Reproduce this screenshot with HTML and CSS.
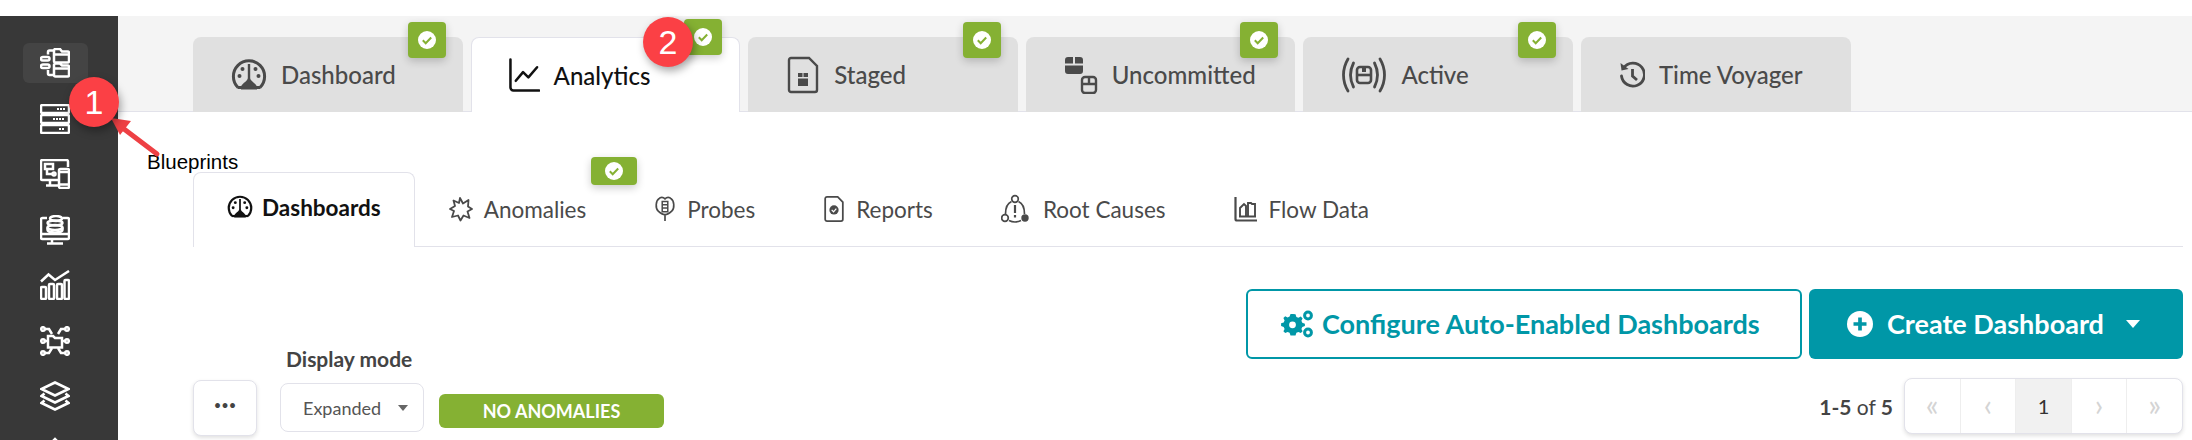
FILE: index.html
```html
<!DOCTYPE html>
<html lang="en">
<head>
<meta charset="utf-8">
<title>Blueprints - Analytics</title>
<link rel="stylesheet" href="styles.css">
</head>
<body>
<svg class="defs" width="0" height="0" aria-hidden="true">
  <symbol id="gauge" viewBox="0 0 36 36">
    <path d="M7 30.500A15.600 15.600 0 1 1 29 30.500" fill="none" stroke="currentColor" stroke-width="3"/>
    <path d="M6.500 30.500h23" stroke="currentColor" stroke-width="3"/>
    <path d="M16.800 7h2.400v14c0 3 4.800 4.500 6.800 8.500v3H10v-3c2-4 6.800-5.500 6.800-8.500z" fill="currentColor"/>
    <circle cx="8.500" cy="19" r="2" fill="currentColor"/><circle cx="11.500" cy="12" r="2" fill="currentColor"/>
    <circle cx="24.500" cy="12" r="2" fill="currentColor"/><circle cx="27.500" cy="19" r="2" fill="currentColor"/>
  </symbol>
  <symbol id="check" viewBox="0 0 20 20">
    <circle cx="10" cy="10" r="9" fill="#fff"/>
    <path d="M5.800 10.300l2.900 2.900 5.500-5.700" fill="none" stroke="#85b133" stroke-width="2"/>
  </symbol>
</svg>
<div class="app">
  <nav class="rail">
    <a class="rail-item is-active"><svg viewBox="0 0 30 30" class="rail-icon"><path d="M14 5.500V13a1.500 1.500 0 0 0 1.500 1.500h12A1.500 1.500 0 0 0 29 13V5a1.500 1.500 0 0 0-1.500-1.500H22L20 1h-4.500A1.500 1.500 0 0 0 14 2.500zM14.500 6.500H29M14 18.500V27a1.500 1.500 0 0 0 1.500 1.500h12A1.500 1.500 0 0 0 29 27V19a1.500 1.500 0 0 0-1.500-1.500H22L20 15.500h-4.500A1.500 1.500 0 0 0 14 17zM15 20.500h14M13 2.500H9.500A1.500 1.500 0 0 0 8 4v2.500M8 22v3.500A1.500 1.500 0 0 0 9.500 27H13"/><rect x="1" y="9" width="8.500" height="3.600" rx="1.800"/><rect x="1" y="16.500" width="8.500" height="3.600" rx="1.800"/></svg></a>
    <a class="rail-item"><svg viewBox="0 0 30 30" class="rail-icon"><rect x="1" y="1" width="28" height="8" rx="1.500"/><rect x="1" y="11" width="28" height="8" rx="1.500"/><rect x="1" y="21" width="28" height="8" rx="1.500"/><path class="dots" d="M17 5h8M13 15h12M19 25h6"/></svg></a>
    <a class="rail-item"><svg viewBox="0 0 30 30" class="rail-icon"><path d="M18 21H2.500A1.500 1.500 0 0 1 1 19.500V2.500A1.500 1.500 0 0 1 2.500 1h24A1.500 1.500 0 0 1 28 2.500V8M10 21v5M6 26.500h12M5 5h8v5H5zM7 10v5h6"/><circle cx="14" cy="15" r="1.500"/><rect x="19" y="10" width="10" height="19" rx="1.500"/><path d="M19.500 13h9M19.500 25.500h9"/></svg></a>
    <a class="rail-item"><svg viewBox="0 0 30 30" class="rail-icon"><path d="M7 3H2.500A1.500 1.500 0 0 0 1 4.500v18A1.500 1.500 0 0 0 2.500 24h25a1.500 1.500 0 0 0 1.500-1.500v-18A1.500 1.500 0 0 0 27.500 3H23M1.500 19h27M12 24v4M7 28.500h16"/><ellipse cx="16" cy="3.500" rx="6" ry="2.400"/><ellipse cx="15" cy="8" rx="7.500" ry="2.400"/><ellipse cx="15" cy="12.500" rx="7.500" ry="2.400"/><path d="M7.500 12.500v2.500c0 1.300 3.400 2.400 7.500 2.400s7.500-1.100 7.500-2.400v-2.500"/></svg></a>
    <a class="rail-item"><svg viewBox="0 0 30 30" class="rail-icon"><path d="M1 11.500l7.500-7 6.500 5.500L29 1"/><rect x="1" y="17" width="5" height="12" rx="1"/><rect x="9" y="14" width="5" height="15" rx="1"/><rect x="17" y="14" width="5" height="15" rx="1"/><rect x="24.500" y="10" width="4.500" height="19" rx="1"/></svg></a>
    <a class="rail-item"><svg viewBox="0 0 30 30" class="rail-icon"><path d="M8 10h5l2 2h7v9.500H8z"/><path d="M4 3h5l3 5M26 3h-5l-3 5M5 15h3M22 15h3M4 27h5l3-5M26 27h-5l-3-5"/><circle cx="3" cy="3" r="1.800"/><circle cx="27" cy="3" r="1.800"/><circle cx="3" cy="15" r="1.800"/><circle cx="27" cy="15" r="1.800"/><circle cx="3" cy="27" r="1.800"/><circle cx="27" cy="27" r="1.800"/></svg></a>
    <a class="rail-item"><svg viewBox="0 0 30 30" class="rail-icon"><path d="M15 1.500L28.500 8 15 14.500 1.500 8zM4.500 12.500l-3 2.500L15 21.500 28.500 15l-3-2.500M4.500 19.500l-3 2.500L15 28.500 28.500 22l-3-2.500"/></svg></a>
    <a class="rail-item"><svg viewBox="0 0 30 30" class="rail-icon"><path d="M15 2v12M9 8l6-6 6 6"/></svg></a>
  </nav>
  <main class="main">
    <header class="top">
      <ul class="tabs">
        <li class="tab"><svg class="tab-icon gauge"><use href="#gauge"/></svg><span>Dashboard</span><span class="badge"><svg class="check"><use href="#check"/></svg></span></li>
        <li class="tab is-current"><svg class="tab-icon chart" viewBox="0 0 32 36"><path d="M1.500 2v29a3 3 0 0 0 3 3H31" fill="none" stroke="currentColor" stroke-width="2.600" stroke-linecap="round"/><path d="M7 24l7.500-9 5.500 5.500L29 10" fill="none" stroke="currentColor" stroke-width="2.600" stroke-linecap="round" stroke-linejoin="round"/></svg><span>Analytics</span><span class="badge badge-raised"><svg class="check"><use href="#check"/></svg></span></li>
        <li class="tab"><svg class="tab-icon" viewBox="0 0 32 38"><path d="M2 4a2 2 0 0 1 2-2h18l8 8v24a2 2 0 0 1-2 2H4a2 2 0 0 1-2-2z" fill="none" stroke="currentColor" stroke-width="2.400"/><path d="M11 17h4.500v4H11zM16.500 17H21v4h-4.500zM11 22.500h10V30H11z" fill="currentColor"/></svg><span>Staged</span><span class="badge"><svg class="check"><use href="#check"/></svg></span></li>
        <li class="tab"><svg class="tab-icon" viewBox="0 0 34 38"><path d="M1 4a3 3 0 0 1 3-3h5v6.500H1zM11 1h5a3 3 0 0 1 3 3v3.500h-8zM1 9.500h18V15a3 3 0 0 1-3 3H4a3 3 0 0 1-3-3z" fill="currentColor"/><rect x="18" y="21" width="14" height="16" rx="3" fill="none" stroke="currentColor" stroke-width="2.400"/><path d="M18 28h14M25 21v7" stroke="currentColor" stroke-width="2.400"/></svg><span>Uncommitted</span><span class="badge"><svg class="check"><use href="#check"/></svg></span></li>
        <li class="tab"><svg class="tab-icon wide" viewBox="0 0 46 36"><path d="M7 2C1 12 1 24 7 34M12.500 6c-4 8-4 16 0 24M39 2c6 10 6 22 0 32M33.500 6c4 8 4 16 0 24" fill="none" stroke="currentColor" stroke-width="2.800" stroke-linecap="round"/><rect x="16" y="10" width="14" height="16" rx="3" fill="none" stroke="currentColor" stroke-width="2.600"/><path d="M16 18h14" stroke="currentColor" stroke-width="2.600"/><path d="M21 10h4v5h-4z" fill="currentColor"/></svg><span>Active</span><span class="badge"><svg class="check"><use href="#check"/></svg></span></li>
        <li class="tab"><svg class="tab-icon narrow" viewBox="0 0 26 30"><path d="M4.500 8A11.500 11.500 0 1 1 2.500 16" fill="none" stroke="currentColor" stroke-width="2.800" stroke-linecap="round"/><path d="M1.500 3l1 7.500 7-1.500z" fill="currentColor"/><path d="M13.500 9v7l4.500 4" fill="none" stroke="currentColor" stroke-width="2.800"/></svg><span>Time Voyager</span></li>
      </ul>
    </header>
    <section class="content">
      <ul class="subtabs">
        <li class="subtab is-current"><svg class="sub-icon gauge-sub"><use href="#gauge"/></svg><span>Dashboards</span></li>
        <li class="subtab"><svg class="sub-icon" viewBox="0 0 24 26"><path d="M11 2l3 5.500L19.500 4l-.5 6.500L23 13l-4.500 2.500 2 6.500-6-2.500-3 5-2.500-5-6 1.500 2-6L1 13l5-3L4.500 4.500 10 7z" fill="none" stroke="currentColor" stroke-width="1.800" stroke-linejoin="round"/></svg><span>Anomalies</span><span class="badge badge-wide"><svg class="check"><use href="#check"/></svg></span></li>
        <li class="subtab"><svg class="sub-icon slim" viewBox="0 0 22 28"><path d="M11 3c-2-2-5-2-6.500 0C1 5 .5 13 3.500 16c2 2 5 4 7.500 4s5.500-2 7.500-4c3-3 2.500-11-1-13C16 1 13 1 11 3zM11 20v7" fill="none" stroke="currentColor" stroke-width="1.800"/><path d="M8 6h6v11H8zM8 9.500h6M8 13h6" fill="none" stroke="currentColor" stroke-width="1.600"/></svg><span>Probes</span></li>
        <li class="subtab"><svg class="sub-icon slim" viewBox="0 0 22 28"><path d="M1.500 3a2 2 0 0 1 2-2H15l5.500 5.500V25a2 2 0 0 1-2 2h-15a2 2 0 0 1-2-2z" fill="none" stroke="currentColor" stroke-width="1.900"/><circle cx="11" cy="15" r="5" fill="currentColor"/><path d="M8.500 15l2 2 3-3.500" fill="none" stroke="#fff" stroke-width="1.300"/></svg><span>Reports</span></li>
        <li class="subtab wide-gap"><svg class="sub-icon root" viewBox="0 0 28 30"><path d="M10.500 7.500C6 9.500 4.500 15 4.500 20M17.500 7.500C22 9.500 23.500 15 23.500 20M8 26.500c4 2 8 2 12 0" fill="none" stroke="currentColor" stroke-width="1.700"/><circle cx="14" cy="5" r="3.300" fill="none" stroke="currentColor" stroke-width="1.700"/><circle cx="4" cy="24" r="3.300" fill="none" stroke="currentColor" stroke-width="1.700"/><circle cx="24" cy="24" r="3.700" fill="currentColor"/><path d="M14 11v8M14 21v2.500" stroke="currentColor" stroke-width="2.200"/></svg><span>Root Causes</span></li>
        <li class="subtab"><svg class="sub-icon" viewBox="0 0 24 26"><path d="M1.500 1v22a1.500 1.500 0 0 0 1.500 1.500h20" fill="none" stroke="currentColor" stroke-width="2.200"/><path d="M6 20v-8l4-4 2 2v10M14 20V7h3l1 1h3v12M5 20.500h17" fill="none" stroke="currentColor" stroke-width="1.900"/></svg><span>Flow Data</span></li>
      </ul>
      <div class="toolbar">
        <div class="controls">
          <button class="more" type="button">•••</button>
          <div class="field">
            <label class="field-label">Display mode</label>
            <div class="select"><span>Expanded</span><i class="caret"></i></div>
          </div>
          <div class="status">NO ANOMALIES</div>
        </div>
        <div class="actions">
          <div class="action-row">
            <button class="btn btn-outline" type="button"><svg class="btn-icon" viewBox="0 0 32 28"><path fill="currentColor" d="M12 4l2.500.3.900 2.600 2 .9 2.400-1.200 1.800 1.800-1.200 2.400.9 2 2.600.900V16l-2.600.9-.9 2 1.200 2.400-1.800 1.800-2.400-1.200-2 .9-.9 2.600H9.500l-.9-2.600-2-.9-2.400 1.200-1.800-1.800 1.200-2.400-.9-2L.100 16v-2.700l2.600-.9.900-2-1.200-2.400 1.800-1.800 2.400 1.200 2-.9.900-2.600z"/><circle cx="11.500" cy="14.800" r="3.400" fill="#fff"/><circle cx="27" cy="5.500" r="3.400" fill="none" stroke="currentColor" stroke-width="3"/><circle cx="27" cy="22.500" r="3.400" fill="none" stroke="currentColor" stroke-width="3"/></svg><span>Configure Auto-Enabled Dashboards</span></button>
            <button class="btn btn-solid" type="button"><svg class="btn-icon plus" viewBox="0 0 24 24"><circle cx="12" cy="12" r="12" fill="#fff"/><path d="M12 6v12M6 12h12" stroke="#0097a7" stroke-width="3.400"/></svg><span>Create Dashboard</span><i class="caret caret-white"></i></button>
          </div>
          <div class="paging">
            <span class="count"><b>1-5</b> of <b>5</b></span>
            <ul class="pager">
              <li class="page off">«</li>
              <li class="page off">‹</li>
              <li class="page on">1</li>
              <li class="page off">›</li>
              <li class="page off">»</li>
            </ul>
          </div>
        </div>
      </div>
    </section>
  </main>
</div>
<span class="callout-label">Blueprints</span>
<svg class="callout-arrow" width="60" height="50" viewBox="0 0 60 50"><path d="M47 39L14 14" stroke="#ee4044" stroke-width="5" stroke-linecap="round"/><path d="M1 3l20 3-11 14z" fill="#ee4044"/></svg>
<span class="marker marker-one">1</span>
<span class="marker marker-two">2</span>
</body>
</html>
```
FILE: styles.css
```css
* { box-sizing: border-box; }
html, body { margin: 0; height: 440px; overflow: hidden; background: #fff; }
body { padding-top: 16px; font-family: "Lato", "Liberation Sans", sans-serif; color: #444; position: relative; }
ul { list-style: none; margin: 0; padding: 0; }
.defs { position: absolute; }

.app { display: flex; height: 424px; overflow: hidden; }
.rail { flex: 0 0 118px; background: #383838; display: flex; flex-direction: column; align-items: center; padding: 27px 8px 0 0; gap: 15.500px; }
.rail-item { flex: 0 0 40px; width: 65px; display: flex; align-items: center; justify-content: center; border-radius: 6px; }
.rail-item.is-active { background: #444; }
.rail-icon { width: 30px; height: 30px; fill: none; stroke: #fff; stroke-width: 2.500; }
.rail-icon .dots { stroke-dasharray: 2 1; stroke-width: 2; }

.main { flex: 1; min-width: 0; }
.top { height: 96px; background: #f4f4f4; border-bottom: 1px solid #e2e2ea; padding: 21px 0 0 75px; }
.tabs { display: flex; gap: 8px; height: 75px; }
.tab { position: relative; flex: 0 0 269.600px; display: flex; align-items: center; gap: 14px; padding: 0 0 0 38px; background: #e0e0e0; border-radius: 8px 8px 0 0; font-size: 24px; font-weight: 500; color: #4a4a4a; }
.tab.is-current { background: #fff; color: #111; border: 1px solid #e2e2ea; border-bottom: 0; height: 75px; padding-left: 37px; }
.tab-icon { width: 34px; height: 38px; flex: none; }
.tab-icon.gauge { width: 36px; height: 36px; }
.tab-icon.chart { width: 31px; height: 36px; }
.tab-icon.wide { width: 46px; height: 36px; }
.tab-icon.narrow { width: 26px; height: 30px; }
.badge { position: absolute; top: -15px; right: 17px; width: 38px; height: 36px; background: #85b133; border-radius: 4px; display: flex; align-items: center; justify-content: center; box-shadow: 0 3px 8px rgba(0, 0, 0, .2); }
.badge-raised { top: -19px; }
.badge-wide { width: 46px; height: 28px; right: -17px; top: -15px; }
.check { width: 20px; height: 20px; }

.content { padding: 0 9px 0 75px; }
.subtabs { display: flex; margin-top: 60px; height: 75px; border-bottom: 1px solid #e2e2ea; }
.subtab { position: relative; display: flex; align-items: center; gap: 11px; padding: 0 34px; font-size: 22.500px; color: #4a4a4a; }
.subtab.wide-gap { gap: 14px; }
.subtab.is-current { padding: 0 33px 6px 33px; gap: 9px; margin-bottom: -1px; color: #111; font-weight: 700; background: #fff; border: 1px solid #e2e2ea; border-bottom: 0; border-radius: 8px 8px 0 0; }
.sub-icon { width: 24px; height: 26px; flex: none; }
.sub-icon.slim { width: 22px; }
.sub-icon.root { width: 28px; height: 30px; }
.gauge-sub { width: 26px; height: 26px; }

.toolbar { display: flex; justify-content: space-between; margin-top: 42px; height: 147px; }
.controls { display: flex; align-items: flex-end; }
.more { width: 64px; height: 56px; border: 1px solid #e2e2ea; border-radius: 8px; background: #fff; box-shadow: 0 2px 4px rgba(0, 0, 0, .12); color: #444; font-size: 13px; letter-spacing: 0; padding: 0 0 6px; font-family: "Lato", sans-serif; }
.field { margin: 0 15px 4px 23px; display: flex; flex-direction: column; gap: 12px; width: 144px; }
.field-label { padding-left: 6px; font-size: 21px; font-weight: 700; color: #444; white-space: nowrap; }
.select { height: 49px; border: 1px solid #e2e2ea; border-radius: 8px; display: flex; align-items: center; gap: 17px; padding: 0 19px 0 22px; font-size: 18px; color: #555; }
.caret { width: 0; height: 0; border-left: 5px solid transparent; border-right: 5px solid transparent; border-top: 6px solid #666; }
.status { margin-bottom: 8px; width: 225px; height: 34px; background: #85b133; border-radius: 6px; color: #fff; font-size: 18px; font-weight: 700; display: flex; align-items: center; justify-content: center; }

.actions { display: flex; flex-direction: column; gap: 19px; }
.action-row { display: flex; gap: 7px; }
.btn { height: 70px; border-radius: 6px; font-family: "Lato", sans-serif; font-size: 27px; font-weight: 700; display: flex; align-items: center; padding-bottom: 2px; }
.btn-outline { width: 556px; border: 2px solid #0097a7; background: #fff; color: #0097a7; padding-left: 32px; gap: 8px; }
.btn-solid { width: 374px; border: 0; background: #0097a7; color: #fff; padding-left: 38px; gap: 14px; }
.btn-icon { width: 34px; height: 28px; flex: none; }
.btn-icon.plus { width: 26px; height: 26px; }
.caret-white { margin-left: 8px; border-top-color: #fff; border-left-width: 7px; border-right-width: 7px; border-top-width: 8px; }

.paging { display: flex; justify-content: flex-end; align-items: center; gap: 11px; }
.count { font-size: 21px; color: #444; }
.count b { font-weight: 700; }
.pager { display: flex; width: 279px; height: 56px; border: 1px solid #e2e2ea; border-radius: 8px; box-shadow: 0 2px 4px rgba(0, 0, 0, .12); overflow: hidden; background: #fff; }
.page { flex: 1; display: flex; align-items: center; justify-content: center; font-size: 18px; border-left: 1px solid #eee; }
.page:first-child { border-left: 0; }
.page.off { color: #d4d4d4; font-size: 30px; padding-bottom: 4px; }
.page.on { background: #f1f1f1; color: #333; font-size: 20px; }

.callout-label { position: absolute; left: 147px; top: 150px; font: 20.500px "Liberation Sans", sans-serif; color: #000; }
.callout-arrow { position: absolute; left: 110px; top: 115px; }
.marker { position: absolute; width: 50px; height: 50px; border-radius: 50%; background: #fb4045; color: #fff; font: 34px/50px "Liberation Sans", sans-serif; text-align: center; box-shadow: 2px 4px 8px rgba(0, 0, 0, .35); }
.marker-one { left: 69px; top: 77px; }
.marker-two { left: 643px; top: 17px; }
```
